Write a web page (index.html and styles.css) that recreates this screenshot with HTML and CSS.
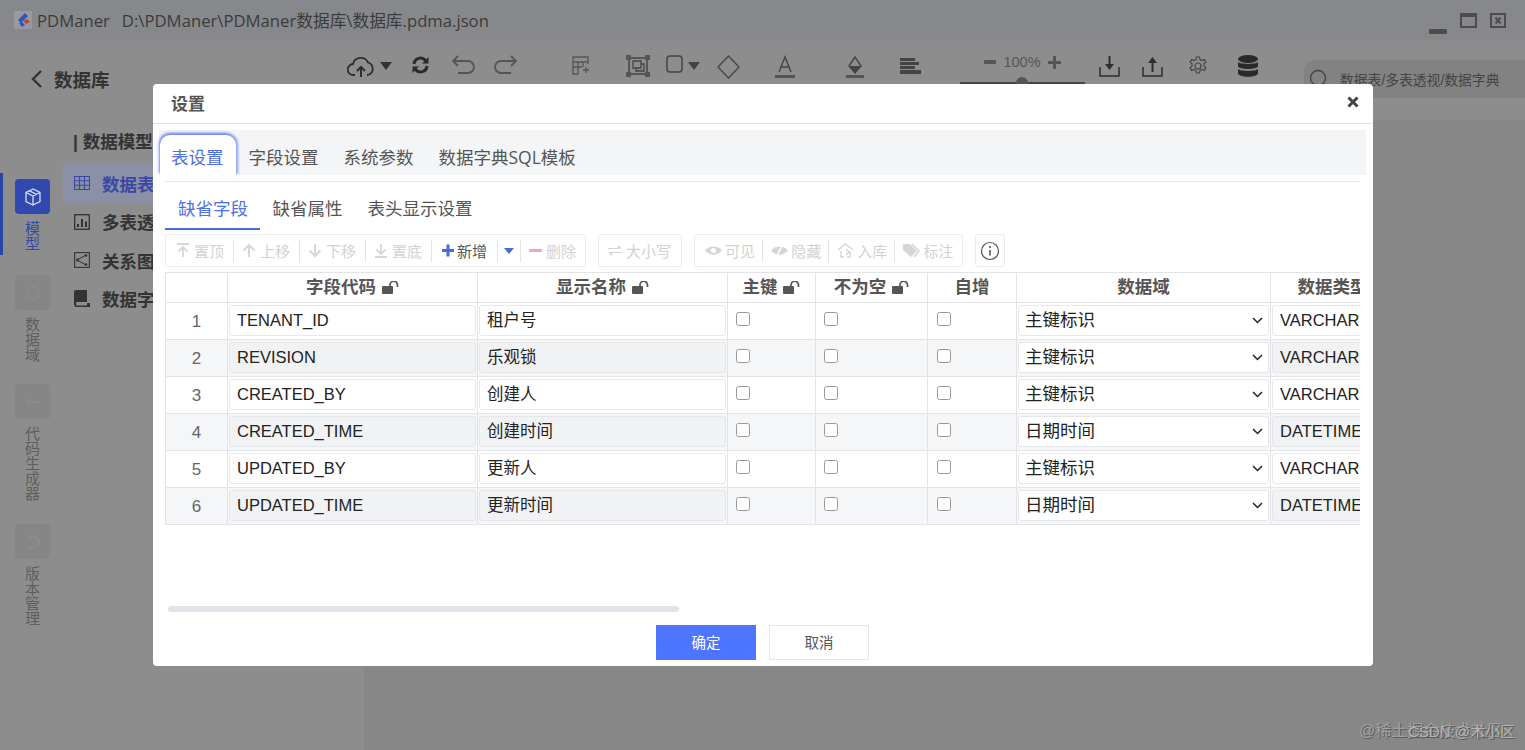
FILE: index.html
```html
<!DOCTYPE html>
<html lang="zh-CN">
<head>
<meta charset="utf-8">
<title>PDManer</title>
<link rel="stylesheet" href="styles.css">
</head>
<body>
<div class="app">
  <header class="titlebar">
    <svg class="logo" width="18" height="18" viewBox="0 0 18 18"><rect width="18" height="18" fill="#9a9a9c"/><path d="M11 2 4 9l3 3 7-7z" fill="#2f55b8"/><path d="M9 10l3 3 4-2-3-3z" fill="#b04a3c"/><path d="M5 12l3 4 3-2-3-3z" fill="#2f55b8"/></svg>
    <span class="app-name">PDManer</span>
    <span class="file-path">D:\PDManer\PDManer数据库\数据库.pdma.json</span>
    <div class="winctl">
      <svg width="18" height="5" viewBox="0 0 18 5"><rect width="18" height="5" rx="1" fill="#4c4c4e"/></svg>
      <svg width="17" height="15" viewBox="0 0 17 15"><rect x="1" y="1" width="15" height="13" fill="none" stroke="#4c4c4e" stroke-width="2"/><rect x="1" y="1" width="15" height="3" fill="#4c4c4e"/></svg>
      <svg width="16" height="15" viewBox="0 0 16 15"><rect x="1" y="1" width="14" height="13" fill="none" stroke="#4c4c4e" stroke-width="2"/><path d="M5.500 4.500l5 6m0-6l-5 6" stroke="#4c4c4e" stroke-width="2"/></svg>
    </div>
  </header>

  <div class="head">
    <div class="back">
      <svg width="14" height="20" viewBox="0 0 14 20"><path d="M11 2 3 10l8 8" fill="none" stroke="#333" stroke-width="2.400"/></svg>
      <span>数据库</span>
    </div>
    <svg class="tool" width="28" height="24" viewBox="0 0 28 24"><path d="M8 20H6.500a5.500 5.500 0 0 1-.5-11 8 8 0 0 1 15-1.500A6.500 6.500 0 0 1 21 20h-1" fill="none" stroke="#2e2e2e" stroke-width="1.800"/><path d="M14 22V12m-4 4 4-4 4 4" fill="none" stroke="#2e2e2e" stroke-width="2"/></svg>
    <svg class="tool g5" width="12" height="8" viewBox="0 0 12 8"><path d="M0 0h12L6 8z" fill="#333"/></svg>
    <svg class="tool g19" width="19" height="20" viewBox="0 0 19 20"><path d="M3 9a6.500 6.500 0 0 1 11.500-3.500M16 11a6.500 6.500 0 0 1-11.500 3.500" fill="none" stroke="#2a2a2a" stroke-width="3"/><path d="M17.500 2v6.500H11zM1.500 18v-6.500H8z" fill="#2a2a2a"/></svg>
    <svg class="tool g21" width="25" height="20" viewBox="0 0 25 20"><path d="M2 6h15a6 6 0 0 1 0 12H7" fill="none" stroke="#555" stroke-width="1.800"/><path d="M7 1 2 6l5 5" fill="none" stroke="#555" stroke-width="1.800"/></svg>
    <svg class="tool g17" width="25" height="20" viewBox="0 0 25 20"><path d="M23 6H8a6 6 0 0 0 0 12h10" fill="none" stroke="#555" stroke-width="1.800"/><path d="M18 1l5 5-5 5" fill="none" stroke="#555" stroke-width="1.800"/></svg>
    <svg class="tool g54" width="18" height="20" viewBox="0 0 18 20"><path d="M1 14V2h15v7M1 7h15M1 12h9M6 7v12H1v-5M11 7v5M14 12v6M11 15h6" fill="none" stroke="#555" stroke-width="1.300"/></svg>
    <svg class="tool g36" width="24" height="22" viewBox="0 0 24 22"><path d="M3 3h18v16H3z" fill="none" stroke="#444" stroke-width="1.500"/><path d="M7 6h8v7H7zM10 13v3h8V9h-3" fill="none" stroke="#444" stroke-width="1.300"/><path d="M0 0h5v5H0zM19 0h5v5h-5zM0 17h5v5H0zM19 17h5v5h-5z" fill="#555"/></svg>
    <svg class="tool g16" width="17" height="18" viewBox="0 0 17 18"><rect x="1" y="1" width="15" height="16" rx="3" fill="none" stroke="#444" stroke-width="1.500"/></svg>
    <svg class="tool g5" width="12" height="8" viewBox="0 0 12 8"><path d="M0 0h12L6 8z" fill="#444"/></svg>
    <svg class="tool g17" width="23" height="24" viewBox="0 0 23 24"><path d="M11.500 1 22 12 11.500 23 1 12z" fill="none" stroke="#444" stroke-width="1.300"/></svg>
    <svg class="tool g35" width="20" height="24" viewBox="0 0 20 24"><path d="M4 17 10 2l6 15M6 12h8" fill="none" stroke="#444" stroke-width="1.400"/><rect y="20" width="20" height="3" fill="#555"/></svg>
    <svg class="tool g50" width="20" height="24" viewBox="0 0 20 24"><path d="M10 2 4 11l6 7 6-7z" fill="none" stroke="#444" stroke-width="1.400"/><path d="M4 11h12l-6 7z" fill="#444"/><rect x="1" y="20" width="18" height="3" fill="#555"/></svg>
    <svg class="tool g35 low" width="21" height="17" viewBox="0 0 21 17"><path d="M0 0h15v3H0zM0 7h19V4H0zM0 8h15v3H0zM0 12h21v4H0z" fill="#444"/></svg>
    <div class="zoomer g39">
      <div class="zoom-row">
        <svg width="12" height="4" viewBox="0 0 12 4"><rect width="12" height="4" rx="1" fill="#555"/></svg>
        <span>100%</span>
        <svg width="13" height="13" viewBox="0 0 13 13"><path d="M5 0h3v5h5v3H8v5H5V8H0V5h5z" fill="#555"/></svg>
      </div>
      <div class="zoom-track"><i></i></div>
    </div>
    <svg class="tool g14" width="21" height="22" viewBox="0 0 21 22"><path d="M1 12v9h19v-9" fill="none" stroke="#2e2e2e" stroke-width="1.500"/><path d="M9.500 1h2v8h3.500l-4.500 6-4.500-6h3.500z" fill="#2e2e2e"/></svg>
    <svg class="tool g22" width="21" height="22" viewBox="0 0 21 22"><path d="M1 12v9h19v-9" fill="none" stroke="#2e2e2e" stroke-width="1.500"/><path d="M9.500 17h2V8h3.500l-4.500-6-4.500 6h3.500z" fill="#2e2e2e"/></svg>
    <svg class="tool g25" width="20" height="22" viewBox="0 0 20 20"><circle cx="10" cy="10" r="3" fill="none" stroke="#444" stroke-width="1.200"/><path d="M8.500 1h3l.5 2.500 2 1 2.400-1 1.500 2.600-1.900 1.700v2.400l1.900 1.700-1.500 2.600-2.400-1-2 1-.5 2.500h-3l-.5-2.500-2-1-2.400 1-1.500-2.600 1.900-1.700V7.800L2.100 6.100l1.500-2.600 2.400 1 2-1z" fill="none" stroke="#444" stroke-width="1.200"/></svg>
    <svg class="tool g30" width="20" height="22" viewBox="0 0 20 22"><ellipse cx="10" cy="4" rx="10" ry="4" fill="#2a2a2a"/><path d="M0 7c2 2.500 18 2.500 20 0v4c0 4-20 4-20 0zM0 14c2 2.500 18 2.500 20 0v4c0 5-20 5-20 0z" fill="#2a2a2a"/></svg>
    <div class="search g46">
      <svg width="20" height="20" viewBox="0 0 20 20"><circle cx="9" cy="9" r="7.500" fill="none" stroke="#444" stroke-width="1.300"/><path d="m14.500 14.500 4 4" stroke="#444" stroke-width="1.300"/></svg>
      <span>数据表/多表透视/数据字典</span>
    </div>
  </div>

  <div class="body">
    <nav class="rail">
      <div class="rail-item active">
        <div class="rail-icon"><svg width="18" height="18" viewBox="0 0 18 18"><path d="M9 1 2 4.500v9L9 17l7-3.500v-9zM2 4.500 9 8l7-3.500M9 8v9M5.500 2.800 12.500 6.300" fill="none" stroke="#d7dcf2" stroke-width="1.300"/></svg></div>
        <span class="rail-label">模型</span>
      </div>
      <div class="rail-item">
        <div class="rail-icon"><svg width="18" height="18" viewBox="0 0 18 18"><circle cx="9" cy="9" r="6" fill="none" stroke="#8b8b8b" stroke-width="2"/></svg></div>
        <span class="rail-label">数据域</span>
      </div>
      <div class="rail-item">
        <div class="rail-icon"><svg width="18" height="18" viewBox="0 0 18 18"><path d="M3 9h12M6 6l-3 3 3 3" fill="none" stroke="#8b8b8b" stroke-width="2"/></svg></div>
        <span class="rail-label">代码生成器</span>
      </div>
      <div class="rail-item">
        <div class="rail-icon"><svg width="18" height="18" viewBox="0 0 18 18"><path d="M4 5a6 6 0 1 1 0 8" fill="none" stroke="#8d8d8d" stroke-width="2"/></svg></div>
        <span class="rail-label">版本管理</span>
      </div>
    </nav>
    <aside class="panel">
      <div class="panel-title">| 数据模型</div>
      <div class="panel-row selected">
        <svg width="16" height="14" viewBox="0 0 16 14"><path d="M.5.500h15v13H.5zM.5 4.800h15M.5 9.200h15M5.500.500v13M10.500.500v13" fill="none" stroke="#3a48a5" stroke-width="1.100"/></svg>
        <span>数据表</span>
      </div>
      <div class="panel-row">
        <svg width="16" height="16" viewBox="0 0 16 16"><rect x=".7" y=".7" width="14.600" height="14.600" fill="none" stroke="#333" stroke-width="1.300"/><path d="M3 10h2v3H3zM7 5h2v8H7zM11 7.500h2V13h-2z" fill="#333"/></svg>
        <span>多表透视</span>
      </div>
      <div class="panel-row">
        <svg width="16" height="16" viewBox="0 0 16 16"><rect x=".6" y=".6" width="14.800" height="14.800" fill="none" stroke="#333" stroke-width="1.100"/><path d="M3 8l9-5M3 8l9 5" stroke="#333" stroke-width="1"/><circle cx="3.500" cy="8" r="1.500" fill="#333"/><circle cx="12" cy="3.500" r="1.300" fill="#333"/><circle cx="12" cy="12.500" r="1.300" fill="#333"/></svg>
        <span>关系图</span>
      </div>
      <div class="panel-row">
        <svg width="16" height="17" viewBox="0 0 16 17"><path d="M2 0h11v12H3a2 2 0 0 0 0 3.500h10V13h3v4H3a3 3 0 0 1-3-3V2a2 2 0 0 1 2-2z" fill="#333"/></svg>
        <span>数据字典</span>
      </div>
    </aside>
    <main class="canvas"></main>
  </div>
</div>

<section class="modal">
  <div class="modal-head">
    <span>设置</span>
    <svg width="12" height="12" viewBox="0 0 12 12"><path d="M1.500 1.500l9 9m0-9-9 9" stroke="#444" stroke-width="3"/></svg>
  </div>
  <div class="tabs">
    <span class="tab on">表设置</span>
    <span class="tab">字段设置</span>
    <span class="tab">系统参数</span>
    <span class="tab">数据字典SQL模板</span>
  </div>
  <div class="content">
    <div class="subtabs">
      <span class="subtab on">缺省字段</span>
      <span class="subtab">缺省属性</span>
      <span class="subtab">表头显示设置</span>
    </div>
    <div class="toolbar">
      <div class="group lead">
        <span class="btn"><svg width="14" height="15" viewBox="0 0 14 15"><path d="M1 1h12M7 14V4M2.500 8.500 7 4l4.500 4.500" fill="none" stroke="#d6d6d6" stroke-width="1.800"/></svg>置顶</span>
        <span class="btn"><svg width="14" height="15" viewBox="0 0 14 15"><path d="M7 14V2M1.500 7.500 7 2l5.500 5.500" fill="none" stroke="#d6d6d6" stroke-width="2"/></svg>上移</span>
        <span class="btn"><svg width="14" height="15" viewBox="0 0 14 15"><path d="M7 1v12M1.500 7.500 7 13l5.500-5.500" fill="none" stroke="#d6d6d6" stroke-width="2"/></svg>下移</span>
        <span class="btn"><svg width="14" height="15" viewBox="0 0 14 15"><path d="M1 14h12M7 1v10M2.500 6.500 7 11l4.500-4.500" fill="none" stroke="#d6d6d6" stroke-width="1.800"/></svg>置底</span>
        <span class="btn live"><svg width="14" height="15" viewBox="0 0 14 15"><path d="M5.500 1.500h3v4.500H13v3H8.500v4.500h-3V9H1V6h4.500z" fill="#4a69dc"/></svg>新增</span>
        <span class="btn caret"><svg width="10" height="6" viewBox="0 0 10 6"><path d="M0 0h10L5 6z" fill="#4a69dc"/></svg></span>
        <span class="btn last"><svg width="13" height="15" viewBox="0 0 13 15"><rect y="6" width="13" height="3" rx="1" fill="#f0a7b4"/></svg>删除</span>
      </div>
      <div class="group">
        <span class="btn last wide"><svg width="14" height="15" viewBox="0 0 14 15"><path d="M0 5h10V2l4 3.500-4 .5H0zM14 10H4v3L0 9.500 4 9h10z" fill="#d6d6d6"/></svg>大小写</span>
      </div>
      <div class="group lead views">
        <span class="btn"><svg width="17" height="15" viewBox="0 0 17 15"><path d="M0 7.500C4 2 13 2 17 7.500 13 13 4 13 0 7.500z" fill="#d6d6d6"/><circle cx="8.500" cy="7.500" r="2.500" fill="#fff"/></svg>可见</span>
        <span class="btn"><svg width="17" height="15" viewBox="0 0 17 15"><path d="M0 7.500C4 2 13 2 17 7.500 13 13 4 13 0 7.500z" fill="#d6d6d6"/><path d="M11 2 6 13" stroke="#fff" stroke-width="1.500"/></svg>隐藏</span>
        <span class="btn"><svg width="17" height="15" viewBox="0 0 17 15"><path d="M1 7l7.500-6L16 7M4 8v6h3M13 8v6h-3M9 6l3 3-3 3" fill="none" stroke="#d6d6d6" stroke-width="1.500"/></svg>入库</span>
        <span class="btn last"><svg width="17" height="15" viewBox="0 0 17 15"><path d="M0 1h7l7 7-6 6-8-7z" fill="#d6d6d6"/><path d="M9 1l7 7-5 6" fill="none" stroke="#d6d6d6" stroke-width="1.500"/></svg>标注</span>
      </div>
      <div class="group info">
        <svg width="20" height="20" viewBox="0 0 20 20"><circle cx="10" cy="10" r="8.500" fill="none" stroke="#555" stroke-width="1.200"/><path d="M10 9v5.500" stroke="#555" stroke-width="1.600"/><circle cx="10" cy="6" r="1.100" fill="#555"/></svg>
      </div>
    </div>
    <div class="table-wrap">
      <table class="grid">
        <colgroup>
          <col class="c-no"><col class="c-code"><col class="c-name"><col class="c-pk"><col class="c-nn"><col class="c-ai"><col class="c-dom"><col class="c-type">
        </colgroup>
        <thead>
          <tr>
            <th></th>
            <th>字段代码 <svg class="lock" width="17" height="13" viewBox="0 0 17 13"><rect y="5" width="11" height="8" rx="1" fill="#555"/><path d="M8 5V4a3.500 3.500 0 0 1 7.500 0v2" fill="none" stroke="#555" stroke-width="1.700"/></svg></th>
            <th>显示名称 <svg class="lock" width="17" height="13" viewBox="0 0 17 13"><rect y="5" width="11" height="8" rx="1" fill="#555"/><path d="M8 5V4a3.500 3.500 0 0 1 7.500 0v2" fill="none" stroke="#555" stroke-width="1.700"/></svg></th>
            <th>主键 <svg class="lock" width="17" height="13" viewBox="0 0 17 13"><rect y="5" width="11" height="8" rx="1" fill="#555"/><path d="M8 5V4a3.500 3.500 0 0 1 7.500 0v2" fill="none" stroke="#555" stroke-width="1.700"/></svg></th>
            <th>不为空 <svg class="lock" width="17" height="13" viewBox="0 0 17 13"><rect y="5" width="11" height="8" rx="1" fill="#555"/><path d="M8 5V4a3.500 3.500 0 0 1 7.500 0v2" fill="none" stroke="#555" stroke-width="1.700"/></svg></th>
            <th>自增</th>
            <th>数据域</th>
            <th>数据类型</th>
          </tr>
        </thead>
        <tbody>
          <tr><td class="no">1</td><td><div class="field">TENANT_ID</div></td><td><div class="field">租户号</div></td><td><i class="box"></i></td><td><i class="box"></i></td><td><i class="box ai"></i></td><td><div class="field sel">主键标识<svg width="11" height="7" viewBox="0 0 11 7"><path d="M1 1l4.500 4.500L10 1" fill="none" stroke="#222" stroke-width="1.500"/></svg></div></td><td><div class="field type">VARCHAR</div></td></tr>
          <tr><td class="no">2</td><td><div class="field">REVISION</div></td><td><div class="field">乐观锁</div></td><td><i class="box"></i></td><td><i class="box"></i></td><td><i class="box ai"></i></td><td><div class="field sel">主键标识<svg width="11" height="7" viewBox="0 0 11 7"><path d="M1 1l4.500 4.500L10 1" fill="none" stroke="#222" stroke-width="1.500"/></svg></div></td><td><div class="field type">VARCHAR</div></td></tr>
          <tr><td class="no">3</td><td><div class="field">CREATED_BY</div></td><td><div class="field">创建人</div></td><td><i class="box"></i></td><td><i class="box"></i></td><td><i class="box ai"></i></td><td><div class="field sel">主键标识<svg width="11" height="7" viewBox="0 0 11 7"><path d="M1 1l4.500 4.500L10 1" fill="none" stroke="#222" stroke-width="1.500"/></svg></div></td><td><div class="field type">VARCHAR</div></td></tr>
          <tr><td class="no">4</td><td><div class="field">CREATED_TIME</div></td><td><div class="field">创建时间</div></td><td><i class="box"></i></td><td><i class="box"></i></td><td><i class="box ai"></i></td><td><div class="field sel">日期时间<svg width="11" height="7" viewBox="0 0 11 7"><path d="M1 1l4.500 4.500L10 1" fill="none" stroke="#222" stroke-width="1.500"/></svg></div></td><td><div class="field type">DATETIME</div></td></tr>
          <tr><td class="no">5</td><td><div class="field">UPDATED_BY</div></td><td><div class="field">更新人</div></td><td><i class="box"></i></td><td><i class="box"></i></td><td><i class="box ai"></i></td><td><div class="field sel">主键标识<svg width="11" height="7" viewBox="0 0 11 7"><path d="M1 1l4.500 4.500L10 1" fill="none" stroke="#222" stroke-width="1.500"/></svg></div></td><td><div class="field type">VARCHAR</div></td></tr>
          <tr><td class="no">6</td><td><div class="field">UPDATED_TIME</div></td><td><div class="field">更新时间</div></td><td><i class="box"></i></td><td><i class="box"></i></td><td><i class="box ai"></i></td><td><div class="field sel">日期时间<svg width="11" height="7" viewBox="0 0 11 7"><path d="M1 1l4.500 4.500L10 1" fill="none" stroke="#222" stroke-width="1.500"/></svg></div></td><td><div class="field type">DATETIME</div></td></tr>
        </tbody>
      </table>
    </div>
    <div class="hscroll"></div>
    <div class="actions">
      <span class="action primary">确定</span>
      <span class="action">取消</span>
    </div>
  </div>
</section>

<div class="mark mark-a">@稀土掘金技术社区</div>
<div class="mark mark-b">CSDN @术小区</div>
</body>
</html>
```
FILE: styles.css
```css
* { box-sizing: border-box; }
html, body { margin: 0; height: 100%; overflow: hidden; }
body {
  font-family: "Liberation Sans", "Noto Sans CJK SC", sans-serif;
  background: #8d8d8d;
  color: #333;
}
svg { flex: none; display: block; }

.app { height: 750px; display: flex; flex-direction: column; }

.titlebar {
  height: 40px;
  background: #87888b;
  display: flex;
  align-items: center;
  padding-left: 14px;
  font-family: "Open Sans", "Noto Sans CJK SC", sans-serif;
  font-size: 16.700px;
  color: #3b3b3d;
}
.logo { margin-right: 5px; }
.app-name { margin-right: 12px; }
.winctl { margin-left: auto; display: flex; align-items: flex-end; gap: 13px; padding-right: 19px; }
.winctl svg:first-child { margin-bottom: -6px; }

.head { height: 80px; display: flex; align-items: flex-start; padding-top: 14px; background: #8d8d8d; }
.back { width: 347px; padding-left: 30px; display: flex; align-items: center; gap: 10px; font-size: 18.500px; font-weight: 700; height: 24px; margin-top: 13px; color: #333; }
.tool { align-self: flex-start; }
svg.tool { margin-top: 1px; }
svg.g5 { margin-top: 8px; }
svg.low { margin-top: 4px; }
.g5 { margin-left: 5px; }
.g14 { margin-left: 14px; }
.g16 { margin-left: 16px; }
.g17 { margin-left: 17px; }
.g19 { margin-left: 19px; }
.g21 { margin-left: 21px; }
.g22 { margin-left: 22px; }
.g25 { margin-left: 25px; }
.g30 { margin-left: 30px; }
.g35 { margin-left: 35px; }
.g36 { margin-left: 36px; }
.g39 { margin-left: 39px; }
.g46 { margin-left: 46px; }
.g50 { margin-left: 50px; }
.g54 { margin-left: 54px; }

.zoomer { width: 125px; }
.zoom-row { display: flex; align-items: center; justify-content: center; gap: 7px; height: 16px; font-size: 14.500px; color: #555; }
.zoom-track { height: 2px; background: #444; margin-top: 12px; position: relative; }
.zoom-track i { position: absolute; left: 56px; top: -5px; width: 12px; height: 12px; border-radius: 50%; background: #555; }

.search {
  width: 221px;
  height: 38px;
  margin-top: 6px;
  border-radius: 12px 0 0 12px;
  background: #828283;
  display: flex;
  align-items: center;
  gap: 11px;
  padding-left: 5px;
  font-size: 13.800px;
  color: #444;
  white-space: nowrap;
}

.body { flex: 1; display: flex; min-height: 0; }
.rail { width: 63px; padding-top: 53px; display: flex; flex-direction: column; gap: 14px; }
.rail-item { display: flex; flex-direction: column; padding: 6px 0 2px 15px; }
.rail-item:last-child { padding-top: 7px; }
.rail-item.active { box-shadow: inset 3px 0 0 #2a44a8; padding-bottom: 4px; }
.rail-icon { width: 35px; height: 35px; border-radius: 4px; background: #868686; display: flex; align-items: center; justify-content: center; }
.active .rail-icon { background: #2f49ae; }
.rail-label { width: 15px; margin: 7px 0 0 10px; font-size: 15px; line-height: 15px; color: #5e5e5e; }
.active .rail-label { color: #3049ad; }

.panel { width: 301px; padding-top: 12px; }
.panel-title { height: 20px; line-height: 20px; padding-left: 10px; font-size: 17.500px; font-weight: 700; color: #333; margin-bottom: 12px; }
.panel-row { height: 38.500px; display: flex; align-items: center; gap: 12px; padding-left: 11px; font-size: 17.500px; font-weight: 700; color: #333; }
.panel-row.selected { background: #8c90a6; color: #3a48a5; }
.canvas { flex: 1; background: #868786; }

.modal {
  position: absolute;
  left: 153px;
  top: 84px;
  width: 1220px;
  height: 582px;
  background: #fff;
  border-radius: 4px;
}
.modal-head {
  height: 40px;
  border-bottom: 1px solid #e3e3e3;
  display: flex;
  align-items: center;
  justify-content: space-between;
  padding: 0 14px 3px 18px;
  font-size: 17px;
  font-weight: 700;
  color: #555;
}
.tabs {
  margin: 6px 7px 0 6px;
  height: 45px;
  background: #f4f5f7;
  padding: 5px 0 0 1px;
  display: flex;
  font-family: "Open Sans", "Noto Sans CJK SC", sans-serif;
  font-size: 17.500px;
  color: #555;
}
.tab { height: 40px; line-height: 44px; padding: 0 12.500px; }
.tab.on { background: #fff; color: #4f70de; width: 76px; padding: 0 0 0 11px; border-radius: 10px 10px 0 0; box-shadow: -1px -2px 3px #6f88ee, 2px -1px 3px #8ea2f2; clip-path: inset(-5px -5px 0 -5px); }

.content { padding: 0 13px 0 12px; }
.subtabs { margin-top: 6px; border-top: 1px solid #e6e6e6; display: flex; font-size: 17.500px; color: #555; }
.subtab { padding: 13px 12.500px 5px; line-height: 28px; height: 48px; }
.subtab.on { color: #4f70de; padding: 13px 12px 5px 13px; width: 95px; border-bottom: 2px solid #4a69dc; }

.toolbar { margin-top: 4px; height: 33px; display: flex; gap: 12px; }
.group { border: 1px solid #ececec; border-radius: 3px; display: flex; align-items: center; }
.group.lead { padding-left: 2px; }
.btn {
  height: 22px;
  display: flex;
  align-items: center;
  gap: 4px;
  padding: 0 9px 0 8px;
  border-right: 1px solid #e3e3e3;
  font-size: 15px;
  color: #d2d2d2;
  white-space: nowrap;
}
.btn.live { color: #555; gap: 2px; padding-left: 9px; padding-right: 10px; }
.btn.caret { padding: 0 6px; }
.btn.last { border-right: 0; }
.btn.wide { padding: 0 10px 0 9px; }
.views .btn { padding: 0 7px 0 8px; gap: 3px; }
.views .btn.last { padding-right: 9px; }
.group.info { width: 30px; justify-content: center; margin-left: 0; }

.table-wrap { margin-top: 5px; height: 334px; overflow: hidden; }
.grid { border-collapse: collapse; table-layout: fixed; width: 1229px; }
.c-no { width: 62px; }
.c-code, .c-name { width: 250px; }
.c-pk { width: 88px; }
.c-nn { width: 112px; }
.c-ai { width: 89px; }
.c-dom { width: 254px; }
.c-type { width: 124px; }
.grid th {
  height: 30px;
  padding: 0;
  border: 1px solid #e4e4e8;
  font-size: 17.500px;
  line-height: 27px;
  font-weight: 700;
  color: #555;
  white-space: nowrap;
  text-align: center;
}
.lock { display: inline-block; vertical-align: -1px; margin-left: 1px; }
.grid td { height: 37px; padding: 2px 1px 0 1px; border: 1px solid #e4e4e8; vertical-align: top; }
.grid tbody tr:nth-child(even) { background: #f4f6f8; }
.grid td.no { text-align: center; font-size: 17px; line-height: 33px; color: #666; }
.field {
  height: 31px;
  line-height: 29px;
  padding-left: 7px;
  border: 1px solid #e8e8e8;
  border-radius: 3px;
  background: #fff;
  font-size: 16.500px;
  color: #222;
  white-space: nowrap;
  overflow: hidden;
}
.grid tbody tr:nth-child(even) .field { background: #f1f2f4; border-color: #e6e7ea; }
.grid tbody tr:nth-child(even) .field.sel { background: #fff; }
.field.sel { display: flex; align-items: center; justify-content: space-between; padding: 0 5px 0 6px; font-size: 17.500px; }
.field.type { width: 130px; }
.box { display: block; width: 14px; height: 14px; margin: 7px 0 0 7px; border: 1.500px solid #9a9a9a; border-radius: 2.500px; background: #fff; }
.box.ai { margin-left: 8px; }
.hscroll { margin-left: 3px; width: 511px; height: 6px; border-radius: 3px; background: #e2e3e8; }
.actions { margin-top: 13px; display: flex; justify-content: center; gap: 13px; }
.action { width: 100px; height: 35px; line-height: 35px; border: 1px solid #e6e6e6; text-align: center; font-size: 14.500px; color: #555; background: #fff; }
.action.primary { background: #4d75ff; border-color: #4d75ff; color: #fff; }

.mark { position: absolute; font-size: 16px; line-height: 20px; white-space: nowrap; color: #a2a2a2; text-shadow: 1px 1px 0 #5c5c5c; }
.mark-a { left: 1359px; top: 721px; }
.mark-b { left: 1408px; top: 722px; font-size: 15px; color: #b5b5b5; }
```
